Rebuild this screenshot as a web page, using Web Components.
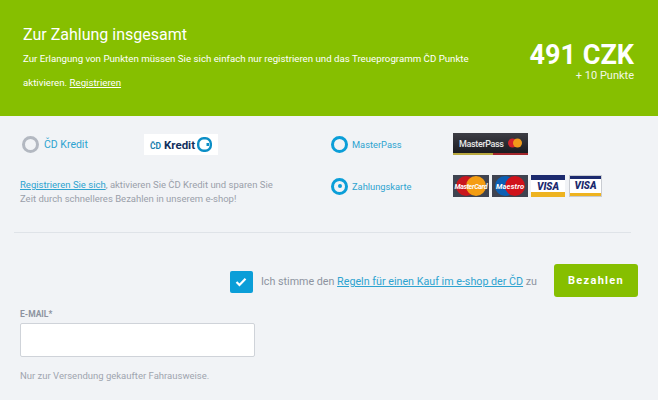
<!DOCTYPE html>
<html lang="de">
<head>
<meta charset="utf-8">
<title>Zahlung</title>
<style>
  html, body { margin: 0; padding: 0; background: #f1f3f6; }
  body { width: 658px; height: 400px; overflow: hidden; font-family: Roboto, "Liberation Sans", sans-serif; }
</style>
</head>
<body>
<pay-summary price="491 CZK" points="+ 10 Punkte"></pay-summary>
<pay-options></pay-options>
<pay-agreement></pay-agreement>
<email-field></email-field>

<script>
class PaySummary extends HTMLElement {
  connectedCallback() {
    this.attachShadow({ mode: 'open' });
    this.shadowRoot.innerHTML = `
      <style>
        :host { display: flex; box-sizing: border-box; height: 116px; padding: 25px 24px 0 23px; background: #86bf00; color: #fff; justify-content: space-between; }
        h1 { margin: 0 0 2px; font-size: 16px; line-height: 20px; font-weight: 400; }
        p { margin: 0; width: 450px; font-size: 9.7px; line-height: 24px; }
        a { color: inherit; }
        .total { text-align: right; padding-top: 16px; }
        .price { font-size: 27px; line-height: 28px; font-weight: 700; }
        .points { font-size: 11px; line-height: 12px; margin-top: 1px; opacity: .9; }
      </style>
      <div>
        <h1>Zur Zahlung insgesamt</h1>
        <p>Zur Erlangung von Punkten müssen Sie sich einfach nur registrieren und das Treueprogramm ČD Punkte aktivieren. <a href="#">Registrieren</a></p>
      </div>
      <div class="total">
        <div class="price">${this.getAttribute('price')}</div>
        <div class="points">${this.getAttribute('points')}</div>
      </div>
    `;
  }
}

class PayRadio extends HTMLElement {
  connectedCallback() {
    this.attachShadow({ mode: 'open' });
    this.shadowRoot.innerHTML = `
      <style>
        :host { display: flex; align-items: center; gap: 4px; font-size: 10.5px; color: #2ea3d0; }
        :host([disabled]) .ring { border-color: #b3b8c1; }
        .ring { box-sizing: border-box; width: 17px; height: 17px; border: 3.5px solid #0b9ed8; border-radius: 50%; display: flex; align-items: center; justify-content: center; }
        .dot { width: 4px; height: 4px; border-radius: 50%; background: #0b9ed8; display: none; }
        :host([checked]) .dot { display: block; }
      </style>
      <span class="ring"><span class="dot"></span></span>
      <slot></slot>
    `;
  }
}

class PayOptions extends HTMLElement {
  connectedCallback() {
    this.attachShadow({ mode: 'open' });
    this.shadowRoot.innerHTML = `
      <style>
        :host { display: grid; grid-template-columns: 124px 187px 122px 1fr; grid-template-rows: 22px 22px; row-gap: 20px; box-sizing: border-box; height: 117px; margin: 0 27px 0 14px; padding: 17px 0 0 6px; border-bottom: 1px solid #dfe3e8; align-items: center; font-family: inherit; }
        pay-radio.first { margin-left: 2px; gap: 5px; }
        .note { grid-column: 1 / 3; align-self: start; margin: 3px 0 0; font-size: 9.5px; line-height: 14px; color: #9aa0aa; width: 265px; }
        .note a { color: #2ea3d0; }
        .logo { display: block; }
        .cards { display: flex; gap: 3px; }
        .cards svg:last-child { margin-left: 1px; }
        .second { font-size: 9.3px; }
        svg text { font-family: Roboto, "Liberation Sans", sans-serif; }
      </style>
      <pay-radio class="first" disabled>ČD Kredit</pay-radio>
      <svg class="logo" width="74" height="21" viewBox="0 0 74 21">
        <rect width="74" height="21" fill="#fff"/>
        <text x="6" y="14.5" font-size="8.5" font-weight="700" fill="#1b7fae">ČD</text>
        <text x="20" y="14.5" font-size="11.5" font-weight="700" fill="#12305c">Kredit</text>
        <rect x="54.2" y="4.2" width="12.6" height="12.6" rx="5.4" fill="none" stroke="#0b8ec6" stroke-width="2.4"/>
        <rect x="62.5" y="9" width="2.5" height="3" fill="#0b8ec6"/>
      </svg>
      <pay-radio class="second">MasterPass</pay-radio>
      <svg class="logo" width="75" height="22" viewBox="0 0 75 22">
        <defs><linearGradient id="mp" x1="0" y1="0" x2="0" y2="1"><stop offset="0" stop-color="#3d3d45"/><stop offset="1" stop-color="#17171c"/></linearGradient></defs>
        <rect width="75" height="22" fill="url(#mp)"/>
        <rect y="20" width="40" height="2" fill="#b9a83f"/><rect x="40" y="20" width="35" height="2" fill="#a3262c"/>
        <text x="6" y="13.5" font-size="9" font-weight="500" fill="#e6e6e6" textLength="45">MasterPass</text>
        <circle cx="59.5" cy="10" r="4.5" fill="#d3222a"/><circle cx="64.5" cy="10" r="4.5" fill="#f09a1a"/>
      </svg>

      <p class="note"><a href="#">Registrieren Sie sich</a>, aktivieren Sie ČD Kredit und sparen Sie Zeit durch schnelleres Bezahlen in unserem e-shop!</p>
      <pay-radio class="second" checked>Zahlungskarte</pay-radio>
      <div class="cards">
        <svg width="36" height="22" viewBox="0 0 36 22"><rect width="36" height="22" fill="#3f4350"/><circle cx="13" cy="11" r="10" fill="#c9161d"/><circle cx="23" cy="11" r="10" fill="#f49d12"/><text x="18" y="14" text-anchor="middle" font-size="7" font-weight="700" font-style="italic" fill="#fff" textLength="33">MasterCard</text></svg>
        <svg width="36" height="22" viewBox="0 0 36 22"><rect width="36" height="22" fill="#3f4350"/><circle cx="13" cy="11" r="10" fill="#0c5fb4"/><circle cx="23" cy="11" r="10" fill="#d0121b"/><text x="18" y="14" text-anchor="middle" font-size="7.5" font-weight="700" font-style="italic" fill="#fff" textLength="28">Maestro</text></svg>
        <svg width="34" height="22" viewBox="0 0 34 22"><rect width="34" height="22" fill="#fff"/><rect width="34" height="5" fill="#1c2a6e"/><rect y="17" width="34" height="5" fill="#eeb320"/><text x="17" y="15" text-anchor="middle" font-size="10" font-weight="900" font-style="italic" fill="#1c2a6e">VISA</text></svg>
        <svg width="33" height="22" viewBox="0 0 33 22"><rect x=".5" y=".5" width="32" height="21" fill="#fff" stroke="#c9ccd2"/><rect x="1" y="1" width="31" height="3" fill="#1c2a6e"/><rect x="1" y="18" width="31" height="3" fill="#eeb320"/><text x="16.5" y="13.5" text-anchor="middle" font-size="10" font-weight="900" font-style="italic" fill="#1c2a6e">VISA</text></svg>
      </div>
    `;
  }
}

class PayAgreement extends HTMLElement {
  connectedCallback() {
    this.attachShadow({ mode: 'open' });
    this.shadowRoot.innerHTML = `
      <style>
        :host { display: flex; justify-content: flex-end; align-items: center; padding: 31px 20px 0 0; height: 33px; }
        .check { box-sizing: border-box; width: 23px; height: 22px; margin-top: 2px; border-radius: 2px; background: #0b9ed8; display: flex; align-items: center; justify-content: center; }
        .label { margin: 2px 17px 0 8px; font-size: 10.72px; color: #8d93a0; }
        .label a { color: #2ea3d0; }
        button { box-sizing: border-box; width: 84px; height: 33px; border: 0; border-radius: 3px; background: #86bf00; color: #fff; font: 700 11px Roboto, "Liberation Sans", sans-serif; letter-spacing: 1.3px; padding: 0; }
      </style>
      <span class="check">
        <svg width="12" height="10" viewBox="0 0 12 10"><path d="M1.5 5l3 3 6-6.2" fill="none" stroke="#fff" stroke-width="2.2"/></svg>
      </span>
      <span class="label">Ich stimme den <a href="#">Regeln für einen Kauf im e-shop der ČD</a> zu</span>
      <button type="button">Bezahlen</button>
    `;
  }
}

class EmailField extends HTMLElement {
  connectedCallback() {
    this.attachShadow({ mode: 'open' });
    this.shadowRoot.innerHTML = `
      <style>
        :host { display: block; padding: 11px 0 0 20px; }
        label { display: block; font-size: 8.5px; line-height: 12px; font-weight: 700; color: #8d93a0; margin-bottom: 3px; }
        input { display: block; box-sizing: border-box; width: 235px; height: 34px; margin: 0; border: 1px solid #cfd3d9; border-radius: 2px; background: #fff; outline: 0; }
        small { display: block; margin-top: 13px; font-size: 9.5px; line-height: 12px; color: #a0a5af; }
      </style>
      <label for="mail">E-MAIL*</label>
      <input id="mail" type="email">
      <small>Nur zur Versendung gekaufter Fahrausweise.</small>
    `;
  }
}

customElements.define('pay-summary', PaySummary);
customElements.define('pay-radio', PayRadio);
customElements.define('pay-options', PayOptions);
customElements.define('pay-agreement', PayAgreement);
customElements.define('email-field', EmailField);
</script>
</body>
</html>
